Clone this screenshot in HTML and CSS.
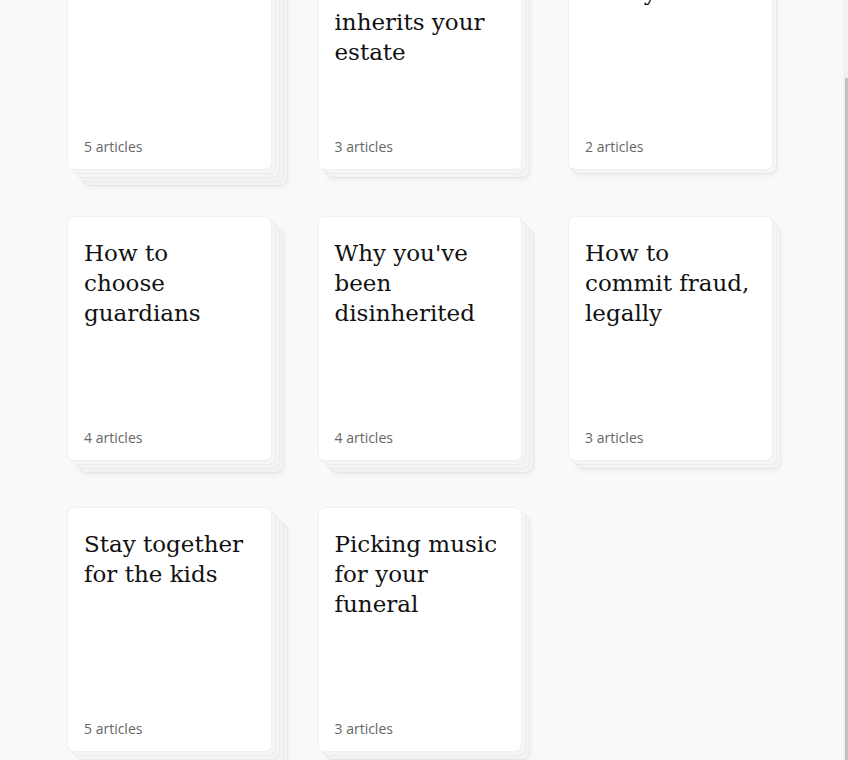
FILE: index.html
```html
<!DOCTYPE html>
<html lang="en">
<head>
    <meta charset="UTF-8">
    <meta name="viewport" content="width=device-width, initial-scale=1.0">
    <title>Topics</title>
    <link rel="stylesheet" href="styles.css">
</head>
<body>
    <div class="page" id="page">
        <main class="topics">
            <a class="card stack-4" href="#">
                <h2 class="title">Writing your first will</h2>
                <span class="count">5 articles</span>
            </a>
            <a class="card stack-2" href="#">
                <h2 class="title">Making sure the cat inherits your estate</h2>
                <span class="count">3 articles</span>
            </a>
            <a class="card stack-1" href="#">
                <h2 class="title">Disown your family</h2>
                <span class="count">2 articles</span>
            </a>
            <a class="card stack-3" href="#">
                <h2 class="title">How to choose guardians</h2>
                <span class="count">4 articles</span>
            </a>
            <a class="card stack-3" href="#">
                <h2 class="title">Why you've been disinherited</h2>
                <span class="count">4 articles</span>
            </a>
            <a class="card stack-2" href="#">
                <h2 class="title">How to commit fraud, legally</h2>
                <span class="count">3 articles</span>
            </a>
            <a class="card stack-4" href="#">
                <h2 class="title">Stay together for the kids</h2>
                <span class="count">5 articles</span>
            </a>
            <a class="card stack-2" href="#">
                <h2 class="title">Picking music for your funeral</h2>
                <span class="count">3 articles</span>
            </a>
        </main>
    </div>
    <!-- the browser hides its own scrollbar in screenshots, so draw one -->
    <div class="scrollbar"><div class="thumb"></div></div>

    <script>
        document.getElementById("page").scrollTop = 90;
    </script>
</body>
</html>
```

FILE: styles.css
```css
*{
    padding: 0;
    margin: 0;
    box-sizing: border-box;
}

body{
    background-color: #f9f9f9;
    font-family: "Open Sans", "Liberation Sans", sans-serif;
}
.page{
    height: 100vh;
    overflow-y: auto;
}
.scrollbar{
    position: fixed;
    top: 0;
    right: 0;
    width: 5px;
    height: 100vh;
    padding-top: 78px;
    padding-left: 2px;
    background-color: #f1f1f1;
}
.thumb{
    height: 100%;
    background-color: #c1c1c1;
}
.topics{
    display: grid;
    grid-template-columns: repeat(3, 202.5px);
    grid-auto-rows: 243px;
    column-gap: 48px;
    row-gap: 48px;
    padding: 16px 0 10px 68px;
}
.card{
    display: flex;
    flex-direction: column;
    justify-content: space-between;
    padding: 21px 16px 12px;
    background-color: white;
    border-radius: 6px;
    color: #111;
    text-decoration: none;
    box-shadow: 0 0 4px rgba(0, 0, 0, 0.07);
}
.title{
    font-family: "DejaVu Serif", "Liberation Serif", serif;
    font-size: 23px;
    font-weight: normal;
    line-height: 30px;
}
.count{
    font-size: 14px;
    line-height: 20px;
    color: #666;
}
.stack-1{
    box-shadow: 0 0 3px rgba(0, 0, 0, 0.08),
        4px 4px 0 #f6f6f6, 4px 4px 2px rgba(0, 0, 0, 0.12),
        4px 6px 6px rgba(0, 0, 0, 0.07);
}
.stack-2{
    box-shadow: 0 0 3px rgba(0, 0, 0, 0.08),
        4px 4px 0 #f6f6f6, 4px 4px 2px rgba(0, 0, 0, 0.12),
        8px 8px 0 #f4f4f4, 8px 8px 2px rgba(0, 0, 0, 0.12),
        8px 10px 6px rgba(0, 0, 0, 0.07);
}
.stack-3{
    box-shadow: 0 0 3px rgba(0, 0, 0, 0.08),
        4px 4px 0 #f6f6f6, 4px 4px 2px rgba(0, 0, 0, 0.12),
        8px 8px 0 #f4f4f4, 8px 8px 2px rgba(0, 0, 0, 0.12),
        12px 12px 0 #f3f3f3, 12px 12px 2px rgba(0, 0, 0, 0.12),
        12px 14px 6px rgba(0, 0, 0, 0.07);
}
.stack-4{
    box-shadow: 0 0 3px rgba(0, 0, 0, 0.08),
        4px 4px 0 #f6f6f6, 4px 4px 2px rgba(0, 0, 0, 0.12),
        8px 8px 0 #f4f4f4, 8px 8px 2px rgba(0, 0, 0, 0.12),
        12px 12px 0 #f3f3f3, 12px 12px 2px rgba(0, 0, 0, 0.12),
        16px 16px 0 #f2f2f2, 16px 16px 2px rgba(0, 0, 0, 0.12),
        16px 18px 6px rgba(0, 0, 0, 0.07);
}
```
